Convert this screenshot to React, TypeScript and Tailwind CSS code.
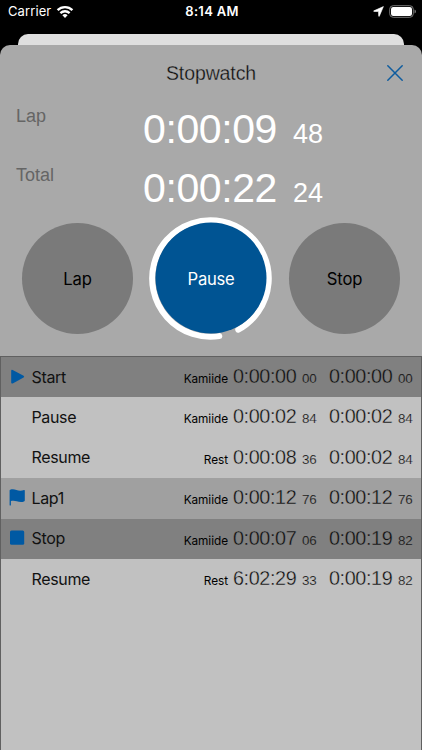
import React from "react";

const ui = "font-['Inter',sans-serif]";
const helv = "font-['Liberation_Sans',sans-serif]";

type Row = {
  icon?: "play" | "flag" | "stop";
  name: string;
  place: string;
  a: [string, string];
  b: [string, string];
  tone: string;
};

const dark = "bg-[#808080] [-webkit-text-stroke-color:#808080]";
const mid = "bg-[#a0a0a0] [-webkit-text-stroke-color:#a0a0a0]";
const light = "bg-[#c1c1c1] [-webkit-text-stroke-color:#c1c1c1]";

const rows: Row[] = [
  { icon: "play", name: "Start", place: "Kamiide", a: ["0:00:00", "00"], b: ["0:00:00", "00"], tone: dark },
  { name: "Pause", place: "Kamiide", a: ["0:00:02", "84"], b: ["0:00:02", "84"], tone: light },
  { name: "Resume", place: "Rest", a: ["0:00:08", "36"], b: ["0:00:02", "84"], tone: light },
  { icon: "flag", name: "Lap1", place: "Kamiide", a: ["0:00:12", "76"], b: ["0:00:12", "76"], tone: mid },
  { icon: "stop", name: "Stop", place: "Kamiide", a: ["0:00:07", "06"], b: ["0:00:19", "82"], tone: dark },
  { name: "Resume", place: "Rest", a: ["6:02:29", "33"], b: ["0:00:19", "82"], tone: light },
];

function RowIcon({ icon }: { icon?: Row["icon"] }) {
  return (
    <svg className="ml-[8px] h-[18px] w-[18px] shrink-0" viewBox="0 0 18 18" fill="#0059a3">
      {icon === "play" && <path d="M2.2 2.9Q2.2 1.2 3.7 1.9L14.6 7.8Q15.8 8.7 14.6 9.5L3.7 15.4Q2.2 16.1 2.2 14.5Z" />}
      {icon === "flag" && (
        <path d="M.6 1.6Q.6 1 1.2.8C3 .1 5.4.2 7.4 1C10 2 12.4 2 15 1.1Q15.8.9 15.8 1.7V11.6Q15.8 12.3 15 12.6C12.6 13.4 10.2 13.2 7.8 12.3C5.6 11.6 3.8 11.6 1.9 12.1V16Q1.9 16.6 1.25 16.6T.6 16Z" />
      )}
      {icon === "stop" && <rect x="1" y="1.6" width="14.2" height="14.2" rx="1.5" />}
    </svg>
  );
}

function Time({ value }: { value: [string, string] }) {
  return (
    <>
      <span className="w-[64px] whitespace-nowrap text-[19.8px] tracking-[-0.38px] [-webkit-text-stroke-width:0.35px]">{value[0]}</span>
      <span className="ml-[5px] w-[15px] text-[13.4px] tracking-[-0.2px] [-webkit-text-stroke-width:0.2px]">{value[1]}</span>
    </>
  );
}

function Readout({ label, time, cents }: { label: string; time: string; cents: string }) {
  return (
    <div className={`flex h-[58.5px] text-white ${helv}`}>
      <span className="w-[127px] pl-[16px] text-[18px] leading-[22px] text-[#656565]">{label}</span>
      <div className="flex h-[48px] items-baseline whitespace-nowrap pl-[16px] leading-[48px]">
        <span className="w-[150px] text-[41px] tracking-[-0.4px]">{time}</span>
        <span className="text-[27px]">{cents}</span>
      </div>
    </div>
  );
}

export default function App() {
  return (
    <main className={`flex h-[750px] w-[422px] flex-col overflow-hidden bg-black ${ui}`}>
      <header className="grid h-[34px] shrink-0 grid-cols-3 pl-[8px] pr-[6px] text-white">
        <div className="flex h-[24px] items-center gap-[5px]">
          <span className="text-[13px] tracking-[0.1px]">Carrier</span>
          <svg width="18" height="14" viewBox="0 0 18 14" fill="none" stroke="#fff" strokeWidth="2.3">
            <path d="M1.6 5.1C5.6 1 12.4 1 16.4 5.1" />
            <path d="M4.4 8.1C7 5.6 11 5.6 13.6 8.1" />
            <path d="M6.4 10.2Q9 8 11.6 10.2L9 12.9Z" fill="#fff" stroke="none" />
          </svg>
        </div>
        <div className="flex h-[24px] items-center justify-center text-[13px] font-semibold tracking-[0.3px]">8:14 AM</div>
        <div className="flex h-[24px] items-center justify-end gap-[5px] pb-px">
          <svg width="11" height="11" viewBox="0 0 11 11" fill="#fff" stroke="#fff" strokeWidth=".6" strokeLinejoin="round">
            <path d="M10.4.6L6.3 10.2Q5.9 10.8 5.7 10.1L5.5 5.6L.9 5.4Q.2 5.2.9 4.8Z" />
          </svg>
          <svg width="27" height="13" viewBox="0 0 27 13">
            <rect x=".7" y=".7" width="23.6" height="11.6" rx="3.5" fill="none" stroke="#777" />
            <rect x="2" y="2" width="21" height="9" rx="2.2" fill="#fff" />
            <path d="M25.5 4.5Q27 5 27 6.5T25.5 8.5Z" fill="#777" />
          </svg>
        </div>
      </header>

      <div className="mx-[18px] h-[21px] shrink-0 rounded-t-[10px] bg-[#dfdfdf]" />

      <section className="-mt-[10px] flex grow flex-col overflow-hidden rounded-t-[10px] bg-[#a9a9a9]">
        <div className={`grid h-[60px] shrink-0 grid-cols-[40px_1fr_40px] items-center pb-[4px] ${helv}`}>
          <span />
          <h1 className="text-center text-[19.5px] leading-[24px] tracking-[-0.1px] text-[#111] [-webkit-text-stroke:0.3px_#a9a9a9]">Stopwatch</h1>
          <svg width="18" height="18" viewBox="0 0 18 18" className="ml-[4px]" stroke="#0e5c9f" strokeWidth="1.5" strokeLinecap="round">
            <path d="M1.8 1.8L16.2 16.2M16.2 1.8L1.8 16.2" />
          </svg>
        </div>

        <Readout label="Lap" time="0:00:09" cents="48" />
        <Readout label="Total" time="0:00:22" cents="24" />

        <div className="-mt-[5px] flex h-[122px] shrink-0 items-center justify-center gap-[16px] text-[16.6px]">
          <button className="h-[111px] w-[111px] rounded-full bg-[#7a7a7a] pt-[3px] tracking-[-0.1px] text-black">Lap</button>
          <button className="grid h-[124px] w-[124px] place-items-center text-white">
            <svg className="col-start-1 row-start-1" width="124" height="124" viewBox="0 0 124 124">
              <path d="M70.3 120.1A58.3 58.3 0 1 1 89.3 113.7" fill="none" stroke="#fff" strokeWidth="6" strokeLinecap="round" />
              <circle cx="62" cy="62" r="55.5" fill="#005493" />
            </svg>
            <span className="col-start-1 row-start-1 pt-[3px] tracking-[-0.25px]">Pause</span>
          </button>
          <button className="h-[111px] w-[111px] rounded-full bg-[#7a7a7a] pt-[3px] tracking-[-0.1px] text-black">Stop</button>
        </div>

        <div className="mt-[17px] grow border-x border-t border-[#606060] bg-[#c1c1c1]">
          {rows.map((r, i) => (
            <div key={i} className={`flex h-[40.5px] items-center pb-px text-[#111] first:h-[40px] ${r.tone}`}>
              <RowIcon icon={r.icon} />
              <span className="ml-[4.5px] grow text-[16px] tracking-[-0.35px]">{r.name}</span>
              <div className={`flex items-baseline pt-px ${helv}`}>
                <span className={`mr-[5px] text-[11.8px] tracking-[-0.05px] text-black ${ui}`}>{r.place}</span>
                <Time value={r.a} />
                <span className="w-[12px]" />
                <Time value={r.b} />
              </div>
              <span className="w-[8px]" />
            </div>
          ))}
        </div>
      </section>
    </main>
  );
}
